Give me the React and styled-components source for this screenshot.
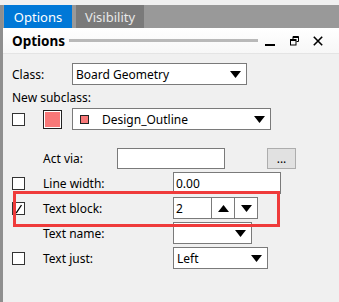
import React from 'react';
import styled, { createGlobalStyle } from 'styled-components';

const GlobalStyle = createGlobalStyle`
  html, body {
    margin: 0;
    padding: 0;
    background: #f0f0f0;
  }
  body {
    font-family: "Noto Sans", "Open Sans", sans-serif;
    font-size: 12px;
    color: #000;
  }
`;

const Window = styled.div`
  position: relative;
  width: 339px;
  height: 302px;
  padding-top: 5px;
  box-sizing: border-box;
  background: #f0f0f0;
  overflow: hidden;
  display: flex;
  flex-direction: column;
`;

const Frame = styled.div`
  flex: 1;
  border-left: 3px solid #8f8f8f;
  display: flex;
  flex-direction: column;
`;

const TabBar = styled.div`
  height: 23px;
  background: #999999;
  display: flex;
  gap: 4px;
  padding-left: 1px;
`;

const Tab = styled.div`
  width: 68px;
  display: flex;
  align-items: center;
  justify-content: center;
  font-size: 13px;
  background: ${(p) => (p.$active ? '#0078d7' : '#7a7a7a')};
  color: ${(p) => (p.$active ? '#ffffff' : '#e8e8e8')};
`;

const Header = styled.div`
  height: 25px;
  display: flex;
  align-items: center;
  padding-left: 9px;
  padding-right: 16px;
  background: linear-gradient(#ffffff, #f7f7f7);
  border-bottom: 1px solid #e4e4e4;
`;

const Title = styled.span`
  font-weight: bold;
  font-size: 13.5px;
`;

const Grip = styled.div`
  flex: 1;
  height: 3px;
  background: #b9b9b9;
  margin: 0 7px 0 4px;
`;

const HeaderIcon = styled.svg`
  display: block;
  margin-left: ${(p) => p.$gap}px;
`;

const Body = styled.div`
  padding: 9px 0 0 9px;
  display: flex;
  flex-direction: column;
`;

const Row = styled.div`
  display: flex;
  align-items: center;
  height: ${(p) => p.$h || 22}px;
  margin-top: ${(p) => p.$top || 0}px;
`;

const Label = styled.div`
  width: ${(p) => p.$w}px;
  flex-shrink: 0;
  white-space: nowrap;
`;

const CheckCell = styled.div`
  width: 31px;
  flex-shrink: 0;
  display: flex;
  align-items: center;
`;

const Check = styled.div`
  width: 13px;
  height: 13px;
  box-sizing: border-box;
  border: 1px solid #333333;
  background: #ffffff;
  display: flex;
  align-items: center;
  justify-content: center;
`;

const Swatch = styled.div`
  width: ${(p) => p.$size}px;
  height: ${(p) => p.$size}px;
  box-sizing: border-box;
  background: #f87878;
  border: 1px solid #222222;
  outline: ${(p) => (p.$ring ? '1px solid #ffffff' : 'none')};
  outline-offset: -2px;
  margin-left: ${(p) => p.$left || 0}px;
  flex-shrink: 0;
`;

const Select = styled.div`
  width: ${(p) => p.$w}px;
  height: 22px;
  box-sizing: border-box;
  border: 1px solid #7a7a7a;
  background: #ffffff;
  display: flex;
  align-items: center;
  padding: 0 5px 0 3px;
  gap: ${(p) => p.$gap || 0}px;
`;

const SelectText = styled.span`
  flex: 1;
  white-space: nowrap;
  overflow: hidden;
`;

const Field = styled.div`
  width: ${(p) => p.$w}px;
  height: ${(p) => p.$h || 22}px;
  box-sizing: border-box;
  border: 1px solid #7a7a7a;
  background: #ffffff;
  display: flex;
  align-items: center;
  padding-left: 2px;
`;

const DotsButton = styled.div`
  width: 29px;
  height: 21px;
  margin-left: 42px;
  box-sizing: border-box;
  border: 1px solid #adadad;
  background: #e1e1e1;
  display: flex;
  align-items: flex-end;
  justify-content: center;
  padding-bottom: 3px;
  line-height: 1;
`;

const Spinner = styled.div`
  display: flex;
  height: 22px;
  box-sizing: border-box;
  border: 1px solid #7a7a7a;
  background: #ffffff;
`;

const SpinText = styled.div`
  width: 37px;
  display: flex;
  align-items: center;
  padding-left: 2px;
  box-sizing: border-box;
`;

const SpinButton = styled.div`
  width: 22px;
  border-left: 1px solid #7a7a7a;
  display: flex;
  align-items: center;
  justify-content: center;
`;

const Highlight = styled.div`
  position: absolute;
  left: 13px;
  top: 191px;
  width: 267px;
  height: 36px;
  box-sizing: border-box;
  border: 3px solid #ef3b3b;
  pointer-events: none;
`;

function Arrow({ up }) {
  return (
    <svg width="11" height="7" viewBox="0 0 11 7">
      <path d={up ? 'M0 7 L5.5 0 L11 7 Z' : 'M0 0 L11 0 L5.5 7 Z'} fill="#000" />
    </svg>
  );
}

function CheckBox({ checked }) {
  return (
    <CheckCell>
      <Check>
        {checked && (
          <svg width="11" height="11" viewBox="0 0 11 11">
            <path d="M2 9.5 L3.5 9.5 L8.5 2" stroke="#000" strokeWidth="1.3" fill="none" />
          </svg>
        )}
      </Check>
    </CheckCell>
  );
}

export default function App() {
  return (
    <>
      <GlobalStyle />
      <Window>
        <Frame>
          <TabBar>
            <Tab $active>Options</Tab>
            <Tab>Visibility</Tab>
          </TabBar>
          <Header>
            <Title>Options</Title>
            <Grip />
            <HeaderIcon $gap={0} width="10" height="10" viewBox="0 0 10 10">
              <rect x="0" y="8" width="10" height="2" fill="#000" />
            </HeaderIcon>
            <HeaderIcon $gap={15} width="9" height="10" viewBox="0 0 9 10">
              <path d="M3 0.5 H8.5 V5.5 H6.5 M3 0.5 V3" stroke="#000" strokeWidth="1" fill="none" />
              <rect x="0.5" y="3.5" width="5.5" height="5.5" stroke="#000" strokeWidth="1" fill="none" />
              <rect x="0.5" y="3.5" width="5.5" height="1.5" fill="#000" />
              <rect x="3" y="0.5" width="5.5" height="1.5" fill="#000" />
            </HeaderIcon>
            <HeaderIcon $gap={14} width="10" height="10" viewBox="0 0 10 10">
              <path d="M0.8 0.8 L9.2 9.2 M9.2 0.8 L0.8 9.2" stroke="#000" strokeWidth="1.6" />
            </HeaderIcon>
          </Header>
          <Body>
            <Row>
              <Label $w={60}>Class:</Label>
              <Select $w={175}>
                <SelectText>Board Geometry</SelectText>
                <Arrow />
              </Select>
            </Row>
            <Row $top={4} $h={16}>
              <Label $w={120}>New subclass:</Label>
            </Row>
            <Row $top={3}>
              <CheckBox />
              <Label $w={29}>
                <Swatch $size={19} $ring />
              </Label>
              <Select $w={199} $gap={13}>
                <Swatch $size={9} $left={4} />
                <SelectText>Design_Outline</SelectText>
                <Arrow />
              </Select>
            </Row>
            <Row $top={17}>
              <CheckCell />
              <Label $w={74}>Act via:</Label>
              <Field $w={108} $h={21} />
              <DotsButton>...</DotsButton>
            </Row>
            <Row $top={3}>
              <CheckBox />
              <Label $w={130}>Line width:</Label>
              <Field $w={108}>0.00</Field>
            </Row>
            <Row $top={3}>
              <CheckBox checked />
              <Label $w={130}>Text block:</Label>
              <Spinner>
                <SpinText>2</SpinText>
                <SpinButton>
                  <Arrow up />
                </SpinButton>
                <SpinButton>
                  <Arrow />
                </SpinButton>
              </Spinner>
            </Row>
            <Row $top={3}>
              <CheckCell />
              <Label $w={130}>Text name:</Label>
              <Select $w={79}>
                <SelectText />
                <Arrow />
              </Select>
            </Row>
            <Row $top={3}>
              <CheckBox />
              <Label $w={130}>Text just:</Label>
              <Select $w={95}>
                <SelectText>Left</SelectText>
                <Arrow />
              </Select>
            </Row>
          </Body>
        </Frame>
        <Highlight />
      </Window>
    </>
  );
}
